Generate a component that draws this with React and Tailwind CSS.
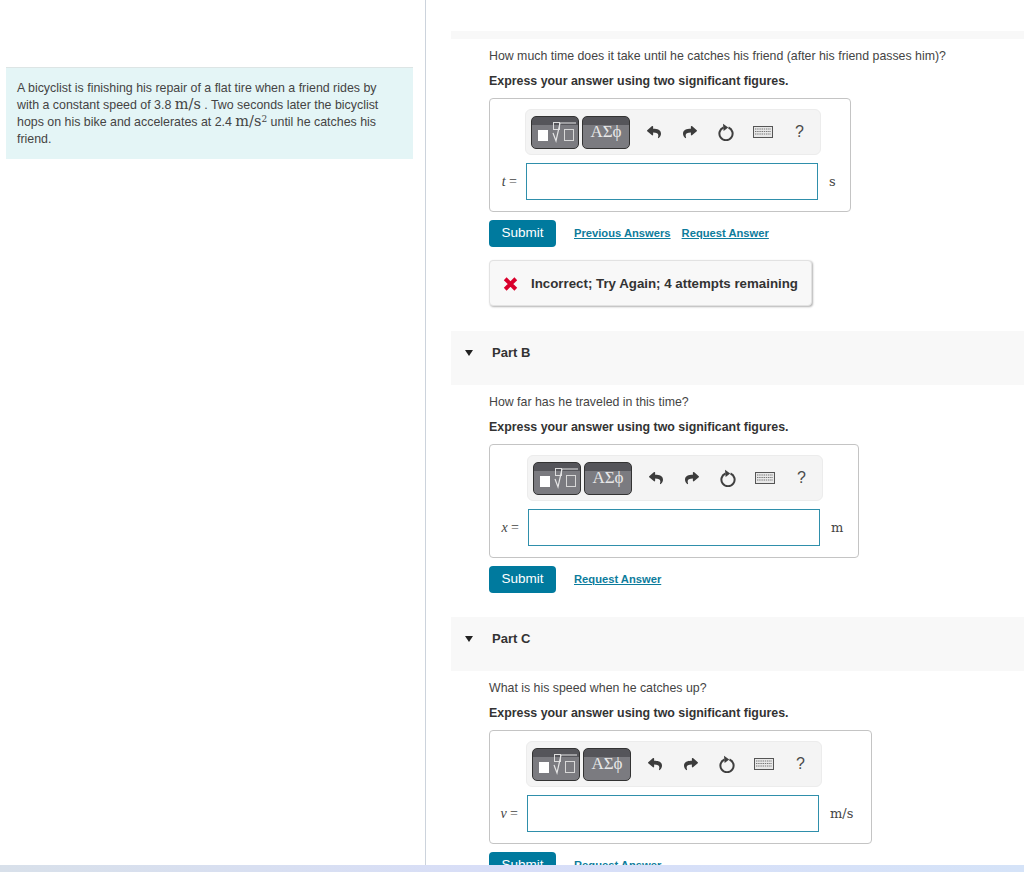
import React from "react";
import { FaReply, FaShare } from "react-icons/fa";

const sans = "font-['Liberation_Sans',Arial,sans-serif]";
const serif = "font-['Liberation_Serif','Times_New_Roman',serif]";
const mathFont = "font-['DejaVu_Serif',serif]";

const TemplateIcon = () => (
  <svg width="46" height="31" viewBox="0 0 46 31" fill="none">
    <rect x="6" y="13" width="10" height="11" fill="#fff" />
    <rect x="21.5" y="5.5" width="6" height="7" stroke="#ddd" strokeWidth="1" />
    <path d="M21 16l3 8 4-18h16" stroke="#e6e6e6" strokeWidth="1.2" />
    <rect x="32.5" y="12.5" width="9" height="11" stroke="#d8d8d8" strokeWidth="1" />
  </svg>
);

const ResetIcon = () => (
  <svg width="18" height="18" viewBox="0 0 18 18" fill="none">
    <path d="M11.5 4.5a6.6 6.6 0 1 1-5 0" stroke="#3f3f3f" strokeWidth="2" />
    <path d="M6 0.8l5.2 3.6L6.6 8z" fill="#3f3f3f" />
  </svg>
);

const KeyboardIcon = () => (
  <svg width="20" height="12" viewBox="0 0 20 12">
    <rect x="0.5" y="0.5" width="19" height="11" fill="#e8e8e8" stroke="#555" />
    <path d="M2 3h16M2 5.5h16M2 8h16" stroke="#777" strokeWidth="1.1" strokeDasharray="1.4 0.8" />
  </svg>
);

const Toolbar = () => (
  <div className="flex items-center h-[46px] w-[296px] rounded-md border border-[#ececec] bg-[#f4f4f4] pl-[5px]">
    <div className="flex items-center justify-center w-[48px] h-[33px] rounded-[5px] border border-[#333] bg-gradient-to-b from-[#55555a] from-25% to-[#7b7b80] to-25%">
      <TemplateIcon />
    </div>
    <div className={`${serif} flex items-center justify-center ml-[3px] w-[48px] h-[33px] rounded-[5px] border border-[#333] bg-gradient-to-b from-[#55555a] from-25% to-[#7b7b80] to-25% text-[#e8e8e8] text-[17px]`}>
      ΑΣϕ
    </div>
    <FaReply className="ml-[17px] text-[14px] text-[#3c3c3c]" />
    <FaShare className="ml-[22px] text-[14px] text-[#3c3c3c]" />
    <div className="ml-[20px] flex">
      <ResetIcon />
    </div>
    <div className="ml-[18px] flex">
      <KeyboardIcon />
    </div>
    <span className={`${sans} ml-[22px] text-[16px] text-[#4a4a4a]`}>?</span>
  </div>
);

const AnswerBox = ({ symbol, unit, width, toolbarPad, inputPad }) => (
  <div className={`${width} h-[114px] rounded border border-[#c4c4c4] pt-[10px]`}>
    <div className={toolbarPad}>
      <Toolbar />
    </div>
    <div className={`flex items-center mt-2 ${inputPad}`}>
      <span className={`${serif} w-[36px] pr-[9px] text-right text-[14px] text-[#444] whitespace-nowrap`}>
        <i>{symbol}</i> =
      </span>
      <div className="w-[292px] h-[37px] border border-[#2f8fab] bg-white" />
      <span className={`${mathFont} ml-[11px] text-[13px] text-[#444]`}>{unit}</span>
    </div>
  </div>
);

const SubmitButton = () => (
  <button className={`${sans} w-[67px] h-[27px] rounded-sm bg-[#007a9e] text-white text-[13.5px]`}>
    Submit
  </button>
);

const AnswerLink = ({ children }) => (
  <a className={`${sans} text-[#0d7c9c] text-[11.2px] font-bold underline`}>{children}</a>
);

const PartHeader = ({ label }) => (
  <div className="flex items-center h-[54px] bg-[#f8f8f8] pl-[14px] pb-[10px]">
    <span className="w-0 h-0 border-x-[4.5px] border-x-transparent border-t-[6px] border-t-[#222]" />
    <span className={`${sans} ml-[19px] text-[13px] font-bold text-[#333]`}>{label}</span>
  </div>
);

const Question = ({ text }) => (
  <div className={`${sans} text-[#444]`}>
    <p className="text-[12.35px] leading-[18px]">{text}</p>
    <p className="mt-[7px] text-[12.4px] leading-[18px] font-bold text-[#333]">
      Express your answer using two significant figures.
    </p>
  </div>
);

export default function App() {
  return (
    <div className="flex flex-col h-[872px] overflow-hidden bg-white">
      <div className="flex flex-1 min-h-0 overflow-hidden">
        <div className="w-[426px] shrink-0 border-r border-[#ccd3dc] pt-[67px] pl-[6px]">
          <div className={`${sans} w-[407px] h-[92px] border-t border-[#dde5e5] bg-[#e4f5f6] pl-[11px] pt-[12px] text-[12.4px] leading-[17px] text-[#444]`}>
            A bicyclist is finishing his repair of a flat tire when a friend rides by
            <br />
            with a constant speed of 3.8 <span className={`${mathFont} text-[14.5px] leading-none`}>m/s</span> . Two seconds later the bicyclist
            <br />
            hops on his bike and accelerates at 2.4 <span className={`${mathFont} text-[14.5px] leading-none`}>m/s<sup className="text-[9px] leading-none">2</sup></span> until he catches his
            <br />
            friend.
          </div>
        </div>

        <div className="flex-1 pl-[25px] pt-[31px]">
          <div className="h-2 bg-[#f8f8f8]" />

          <div className="pl-[38px] pt-2">
            <Question text="How much time does it take until he catches his friend (after his friend passes him)?" />
            <div className="mt-2">
              <AnswerBox symbol="t" unit="s" width="w-[362px]" toolbarPad="pl-[35px]" inputPad="" />
            </div>
            <div className="flex items-center mt-2">
              <SubmitButton />
              <div className="ml-[18px] flex gap-[11px]">
                <AnswerLink>Previous Answers</AnswerLink>
                <AnswerLink>Request Answer</AnswerLink>
              </div>
            </div>
            <div className="flex items-center mt-[13px] w-[323px] h-[46px] rounded border border-[#e2e2e2] bg-[#f8f8f8] shadow-[1px_1px_2px_rgba(0,0,0,0.3)] pl-[13px] pt-px">
              <svg width="15" height="14" viewBox="0 0 15 14">
                <path d="M2.2 1.8l10.6 10.4M12.8 1.8L2.2 12.2" stroke="#d9002c" strokeWidth="4" />
              </svg>
              <span className={`${sans} ml-[13px] text-[13.3px] font-bold text-[#333]`}>
                Incorrect; Try Again; 4 attempts remaining
              </span>
            </div>
          </div>

          <div className="mt-[25px]">
            <PartHeader label="Part B" />
          </div>
          <div className="pl-[38px] pt-2">
            <Question text="How far has he traveled in this time?" />
            <div className="mt-2">
              <AnswerBox symbol="x" unit="m" width="w-[370px]" toolbarPad="pl-[37px]" inputPad="pl-[2px]" />
            </div>
            <div className="flex items-center mt-2">
              <SubmitButton />
              <div className="ml-[18px] flex">
                <AnswerLink>Request Answer</AnswerLink>
              </div>
            </div>
          </div>

          <div className="mt-[24px]">
            <PartHeader label="Part C" />
          </div>
          <div className="pl-[38px] pt-2">
            <Question text="What is his speed when he catches up?" />
            <div className="mt-2">
              <AnswerBox symbol="v" unit="m/s" width="w-[383px]" toolbarPad="pl-[36px]" inputPad="pl-[1px]" />
            </div>
            <div className="flex items-center mt-2">
              <SubmitButton />
              <div className="ml-[18px] flex">
                <AnswerLink>Request Answer</AnswerLink>
              </div>
            </div>
          </div>
        </div>
      </div>
      <div className="h-[7px] shrink-0 bg-gradient-to-r from-[#d8e0ea] via-[#d8def8] to-[#d5e3f8]" />
    </div>
  );
}
